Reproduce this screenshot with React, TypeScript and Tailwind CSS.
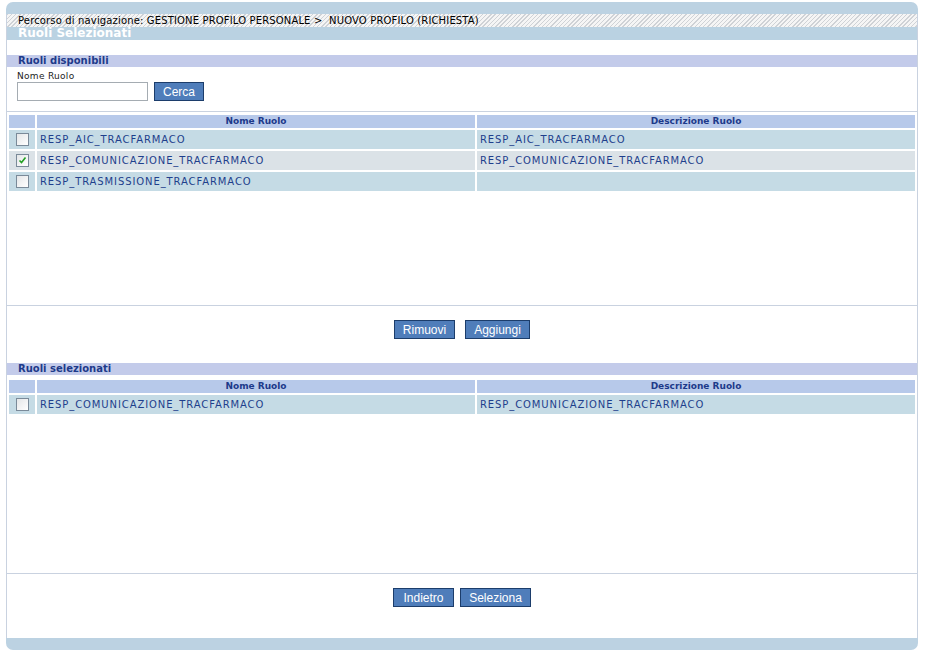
import type { ReactNode } from "react";

type Ruolo = { nome: string; descrizione: string; checked?: boolean };

const disponibili: Ruolo[] = [
  { nome: "RESP_AIC_TRACFARMACO", descrizione: "RESP_AIC_TRACFARMACO" },
  { nome: "RESP_COMUNICAZIONE_TRACFARMACO", descrizione: "RESP_COMUNICAZIONE_TRACFARMACO", checked: true },
  { nome: "RESP_TRASMISSIONE_TRACFARMACO", descrizione: "" },
];

const selezionati: Ruolo[] = [
  { nome: "RESP_COMUNICAZIONE_TRACFARMACO", descrizione: "RESP_COMUNICAZIONE_TRACFARMACO" },
];

function Checkbox({ checked }: { checked?: boolean }) {
  return (
    <span className="flex h-[13px] w-[13px] items-center justify-center border border-[#7a8a99] bg-gradient-to-br from-[#e4e6e8] to-white">
      {checked && (
        <svg width="9" height="9" viewBox="0 0 9 9">
          <path d="M1.5 4.5 L3.5 6.5 L7.5 1.5" fill="none" stroke="#21a121" strokeWidth="1.6" />
        </svg>
      )}
    </span>
  );
}

function Btn({ children, w }: { children: ReactNode; w: string }) {
  return (
    <button
      type="button"
      className={`h-[19px] ${w} border border-[#1c3d6b] bg-[#4f7dba] font-['Liberation_Sans',Arial,sans-serif] text-[12px] leading-none text-white`}
    >
      {children}
    </button>
  );
}

function SectionBand({ label }: { label: string }) {
  return (
    <div className="h-[12px] bg-[#c3cbea] pl-[11px] text-[10px] font-bold leading-[12px] text-[#1d3a8a]">{label}</div>
  );
}

function RuoliTable({ rows }: { rows: Ruolo[] }) {
  return (
    <table className="w-full border-separate border-spacing-[2px] font-['DejaVu_Sans',Verdana,sans-serif]">
      <thead>
        <tr className="h-[13px] bg-[#b7c9ea] text-[9px] font-bold text-[#1d3a8a]">
          <th className="w-[26px] p-0"></th>
          <th className="w-[438px] p-0 leading-[13px]">Nome Ruolo</th>
          <th className="p-0 leading-[13px]">Descrizione Ruolo</th>
        </tr>
      </thead>
      <tbody>
        {rows.map((r, i) => (
          <tr key={r.nome} className={`h-[19px] text-[10px] tracking-[0.9px] text-[#1e3f8c] ${i % 2 === 1 ? "bg-[#dbe2e7]" : "bg-[#c5dbe5]"}`}>
            <td className="p-0">
              <div className="flex justify-center">
                <Checkbox checked={r.checked} />
              </div>
            </td>
            <td className="p-0 pl-[3px]">{r.nome}</td>
            <td className="p-0 pl-[3px]">{r.descrizione}</td>
          </tr>
        ))}
      </tbody>
    </table>
  );
}

export default function App() {
  return (
    <div className="h-[656px] w-[926px] bg-white pt-[2px] pl-[6px] font-['DejaVu_Sans',Verdana,sans-serif]">
      <div className="w-[912px]">
        <div className="h-[12px] rounded-t-[7px] bg-[#bcd2e2]"></div>
        <div className="border-x border-[#c9d2e0]">
          <div className="h-[13px] bg-[repeating-linear-gradient(135deg,#cfd2d6_0px,#cfd2d6_1px,#f5f5f5_1px,#f5f5f5_3px)] pl-[11px] text-[10px] leading-[14px] tracking-[0.15px] text-black">
            Percorso di navigazione: GESTIONE PROFILO PERSONALE &gt;&nbsp; NUOVO PROFILO (RICHIESTA)
          </div>
          <div className="h-[13px] bg-[#bad2e2] pl-[11px] text-[12px] font-bold leading-[13px] text-white">Ruoli Selezionati</div>
          <div className="h-[15px]"></div>
          <SectionBand label="Ruoli disponibili" />
          <div className="h-[44px] pl-[10px] pt-[4px]">
            <div className="text-[9px] leading-[10px] tracking-[0.3px] text-[#222]">Nome Ruolo</div>
            <div className="mt-[1px] flex items-center gap-[6px]">
              <input className="h-[19px] w-[131px] border border-[#a5acb2] bg-white" />
              <Btn w="w-[50px]">Cerca</Btn>
            </div>
          </div>
          <div className="h-[194px] border-t border-[#c9d2e0] pt-[1px]">
            <RuoliTable rows={disponibili} />
          </div>
          <div className="flex h-[58px] items-start justify-center gap-[10px] border-t border-[#c9d2e0] pt-[14px]">
            <Btn w="w-[61px]">Rimuovi</Btn>
            <Btn w="w-[65px]">Aggiungi</Btn>
          </div>
          <SectionBand label="Ruoli selezionati" />
          <div className="h-[198px] pt-[3px]">
            <RuoliTable rows={selezionati} />
          </div>
          <div className="flex h-[65px] items-start justify-center gap-[6px] border-t border-[#c9d2e0] pt-[14px]">
            <Btn w="w-[61px]">Indietro</Btn>
            <Btn w="w-[71px]">Seleziona</Btn>
          </div>
        </div>
        <div className="h-[12px] rounded-b-[7px] bg-[#bcd2e2]"></div>
      </div>
    </div>
  );
}
